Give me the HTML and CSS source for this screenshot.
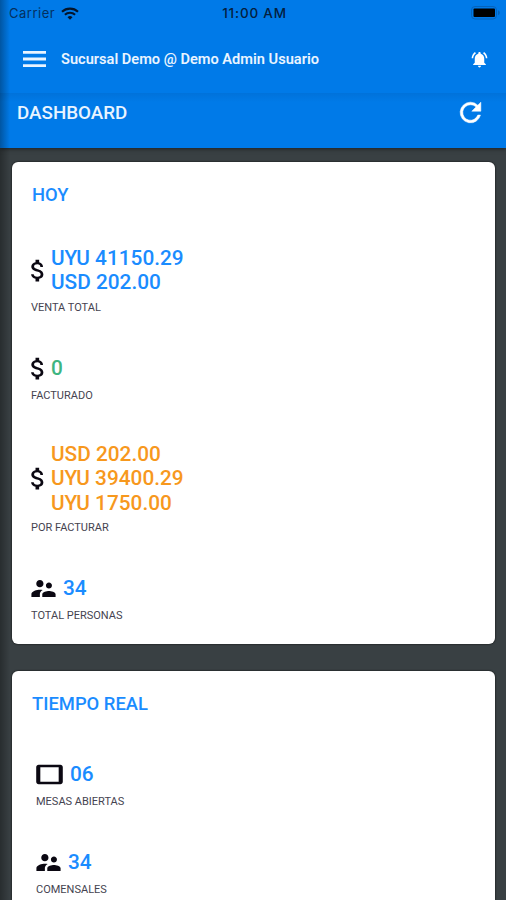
FILE: index.html
```
<!DOCTYPE html>
<html lang="es">
  <head>
    <meta charset="utf-8">
    <title>Dashboard</title>
    <link rel="stylesheet" href="styles.css">
  </head>
  <body>
    <header class="header">
      <div class="status-bar">
        <div class="carrier">
          <span>Carrier</span>
          <svg class="wifi" viewBox="0 0 18 13" fill="none" stroke="#04152b" stroke-width="2.1">
            <path d="M1 4.8a11.6 11.6 0 0 1 16 0M3.9 7.8a7.4 7.4 0 0 1 10.2 0"/>
            <path d="M6.5 10.2a3.7 3.7 0 0 1 5 0L9 12.8z" fill="#04152b" stroke="none"/>
          </svg>
        </div>
        <span class="clock">11:00 AM</span>
        <svg class="battery" viewBox="0 0 29 14">
          <rect x="0.5" y="0.5" width="25" height="12.5" rx="3.5" fill="none" stroke="#0563bb"/>
          <rect x="2.5" y="2.5" width="21.5" height="8.5" rx="1" fill="#000"/>
          <path d="M27 4.2a2.6 2.6 0 0 1 0 5z" fill="#0563bb"/>
        </svg>
      </div>
      <div class="toolbar">
        <svg class="menu" viewBox="0 0 23 16" fill="#e9f4ff">
          <path d="M0 0h23v2.8H0zM0 6.6h23v2.8H0zM0 13.2h23V16H0z"/>
        </svg>
        <span class="branch">Sucursal Demo @ Demo Admin Usuario</span>
        <svg class="bell" viewBox="0 0 24 24" fill="#fff">
          <path d="M7.58 4.08L6.15 2.65C3.75 4.48 2.17 7.3 2.03 10.5h2c.15-2.65 1.51-4.97 3.55-6.42zm12.39 6.42h2c-.15-3.2-1.73-6.02-4.12-7.85l-1.42 1.43c2.02 1.45 3.39 3.77 3.54 6.42zM18 11c0-3.07-1.64-5.64-4.5-6.32V4c0-.83-.67-1.5-1.5-1.5s-1.5.67-1.5 1.5v.68C7.63 5.36 6 7.92 6 11v5l-2 2v1h16v-1l-2-2v-5zm-6 11c1.1 0 2-.9 2-2h-4c0 1.1.9 2 2 2z"/>
        </svg>
      </div>
      <div class="title-bar">
        <h1>DASHBOARD</h1>
        <svg class="refresh" viewBox="0 0 24 24" fill="#fff" stroke="#fff" stroke-width="0.4">
          <path d="M17.65 6.35A7.96 7.96 0 0 0 12 4a8 8 0 1 0 7.73 10h-2.08A6 6 0 1 1 12 6c1.66 0 3.14.69 4.22 1.78L13 11h7V4l-2.35 2.35z"/>
        </svg>
      </div>
    </header>

    <svg class="symbols">
      <symbol id="money" viewBox="6.3 0 11.5 24">
        <path d="M11.8 10.9c-2.27-.59-3-1.2-3-2.15 0-1.09 1.01-1.85 2.7-1.85 1.78 0 2.44.85 2.5 2.1h2.21c-.07-1.72-1.12-3.3-3.21-3.81V3h-3v2.16c-1.94.42-3.5 1.68-3.5 3.61 0 2.31 1.91 3.46 4.7 4.13 2.5.6 3 1.48 3 2.41 0 .69-.49 1.79-2.7 1.79-2.06 0-2.87-.92-2.98-2.1h-2.2c.12 2.19 1.76 3.42 3.68 3.83V21h3v-2.15c1.95-.37 3.5-1.5 3.5-3.55 0-2.84-2.43-3.81-4.7-4.4z"/>
      </symbol>
      <symbol id="people" viewBox="2 0 20 24">
        <path d="M16.5 12c1.38 0 2.49-1.12 2.49-2.5S17.88 7 16.5 7 14 8.12 14 9.5s1.12 2.5 2.5 2.5zM9 11c1.66 0 2.99-1.34 2.99-3S10.66 5 9 5 6 6.34 6 8s1.34 3 3 3zm7.5 3c-1.83 0-5.5.92-5.5 2.75V19h11v-2.25c0-1.83-3.67-2.75-5.5-2.75zM9 13c-2.33 0-7 1.17-7 3.5V19h7v-2.25c0-.85.33-2.34 2.37-3.47C10.5 13.1 9.66 13 9 13z"/>
      </symbol>
      <symbol id="tablet" viewBox="1 0 22 24">
        <path d="M21 4H3c-1.1 0-2 .9-2 2v12c0 1.1.9 2 2 2h18c1.1 0 2-.9 2-2V6c0-1.1-.9-2-2-2zm-1.4 14H4.4V6h15.2v12z"/>
      </symbol>
    </svg>

    <main class="cards">
      <section class="card">
        <h2>HOY</h2>
        <div class="stats">
          <div class="stat">
            <div class="stat-row">
              <svg class="icon money"><use href="#money"/></svg>
              <div class="values blue"><span>UYU 41150.29</span><span>USD 202.00</span></div>
            </div>
            <div class="label">VENTA TOTAL</div>
          </div>
          <div class="stat">
            <div class="stat-row">
              <svg class="icon money"><use href="#money"/></svg>
              <div class="values green"><span>0</span></div>
            </div>
            <div class="label">FACTURADO</div>
          </div>
          <div class="stat">
            <div class="stat-row">
              <svg class="icon money"><use href="#money"/></svg>
              <div class="values orange"><span>USD 202.00</span><span>UYU 39400.29</span><span>UYU 1750.00</span></div>
            </div>
            <div class="label">POR FACTURAR</div>
          </div>
          <div class="stat">
            <div class="stat-row">
              <svg class="icon people"><use href="#people"/></svg>
              <div class="values blue"><span>34</span></div>
            </div>
            <div class="label">TOTAL PERSONAS</div>
          </div>
        </div>
      </section>

      <section class="card last">
        <h2>TIEMPO REAL</h2>
        <div class="stats indent">
          <div class="stat">
            <div class="stat-row">
              <svg class="icon tablet"><use href="#tablet"/></svg>
              <div class="values blue"><span>06</span></div>
            </div>
            <div class="label">MESAS ABIERTAS</div>
          </div>
          <div class="stat">
            <div class="stat-row">
              <svg class="icon people"><use href="#people"/></svg>
              <div class="values blue"><span>34</span></div>
            </div>
            <div class="label">COMENSALES</div>
          </div>
        </div>
      </section>
    </main>
    <div class="edge-shadow"></div>
  </body>
</html>
```
FILE: styles.css
```
* {
  box-sizing: border-box;
}

body {
  margin: 0;
  height: 900px;
  overflow: hidden;
  position: relative;
  display: flex;
  flex-direction: column;
  background: #394043;
  font-family: Roboto, sans-serif;
}

h1, h2 {
  margin: 0;
  font-weight: 500;
}

svg {
  display: block;
  flex-shrink: 0;
}

.symbols {
  display: none;
}

.header {
  height: 148px;
  flex-shrink: 0;
  background: #007ae8;
  box-shadow: 0 1px 4px rgba(0, 0, 0, 0.5);
}

.status-bar {
  display: grid;
  grid-template-columns: 1fr auto 1fr;
  align-items: center;
  height: 26px;
  padding: 0 6px 0 9px;
  font-family: Inter, sans-serif;
  font-size: 13px;
  color: #04305f;
}

.carrier {
  display: flex;
  align-items: center;
  gap: 6px;
  letter-spacing: 0.5px;
}

.wifi {
  width: 18px;
  height: 13px;
}

.clock {
  font-size: 13.5px;
  font-weight: 500;
  letter-spacing: 0.8px;
  color: #04203f;
}

.battery {
  width: 29px;
  height: 14px;
  justify-self: end;
}

.toolbar {
  display: flex;
  align-items: center;
  height: 67px;
  padding: 0 17px 1px 23px;
}

.menu {
  width: 23px;
  height: 16px;
}

.branch {
  flex: 1;
  margin-left: 15px;
  font-size: 14.6px;
  font-weight: 600;
  color: #e9f4ff;
}

.bell {
  width: 19px;
  height: 19px;
}

.title-bar {
  display: flex;
  align-items: center;
  justify-content: space-between;
  height: 55px;
  padding: 0 20px 16px 17px;
  background: linear-gradient(#0072da, #007ae8 9px);
}

.title-bar h1 {
  font-size: 18.8px;
  color: #e9f4ff;
}

.refresh {
  width: 31px;
  height: 31px;
}

.cards {
  flex: 1;
  min-height: 0;
  display: flex;
  flex-direction: column;
  gap: 27px;
  padding: 14px 11px 0 12px;
}

.card {
  height: 482px;
  flex-shrink: 0;
  padding: 21px 19px 0;
  background: #fff;
  border-radius: 6px;
  box-shadow: 0 0 2px #000;
}

.card.last {
  height: auto;
  flex: 1;
  min-height: 0;
  border-radius: 6px 6px 0 0;
}

.card h2 {
  padding-left: 1px;
  font-size: 18.4px;
  line-height: 24px;
  color: #1a8cff;
}

.stats {
  display: flex;
  flex-direction: column;
  gap: 38px;
  padding-top: 38.5px;
}

.stats.indent {
  padding: 44px 0 0 5px;
}

.stat-row {
  display: flex;
  align-items: center;
  gap: 7px;
  min-height: 29px;
}

.icon {
  height: 29px;
  fill: #0b0812;
}

.icon.money {
  width: 14px;
  margin-right: -1px;
}

.icon.people {
  width: 25px;
}

.icon.tablet {
  width: 27px;
}

.values {
  display: flex;
  flex-direction: column;
  font-size: 20.8px;
  font-weight: 500;
  line-height: 24.5px;
}

.blue {
  color: #1a8cff;
}

.green {
  color: #3fb582;
}

.orange {
  color: #f7981d;
}

.label {
  margin-top: 5px;
  font-size: 11px;
  line-height: 16px;
  color: #45434f;
}

/* drawer shadow along the left side */
.edge-shadow {
  position: absolute;
  top: 0;
  bottom: 0;
  left: 0;
  width: 10px;
  background: linear-gradient(to right, rgba(0, 0, 0, 0.3), rgba(0, 0, 0, 0));
}
```
